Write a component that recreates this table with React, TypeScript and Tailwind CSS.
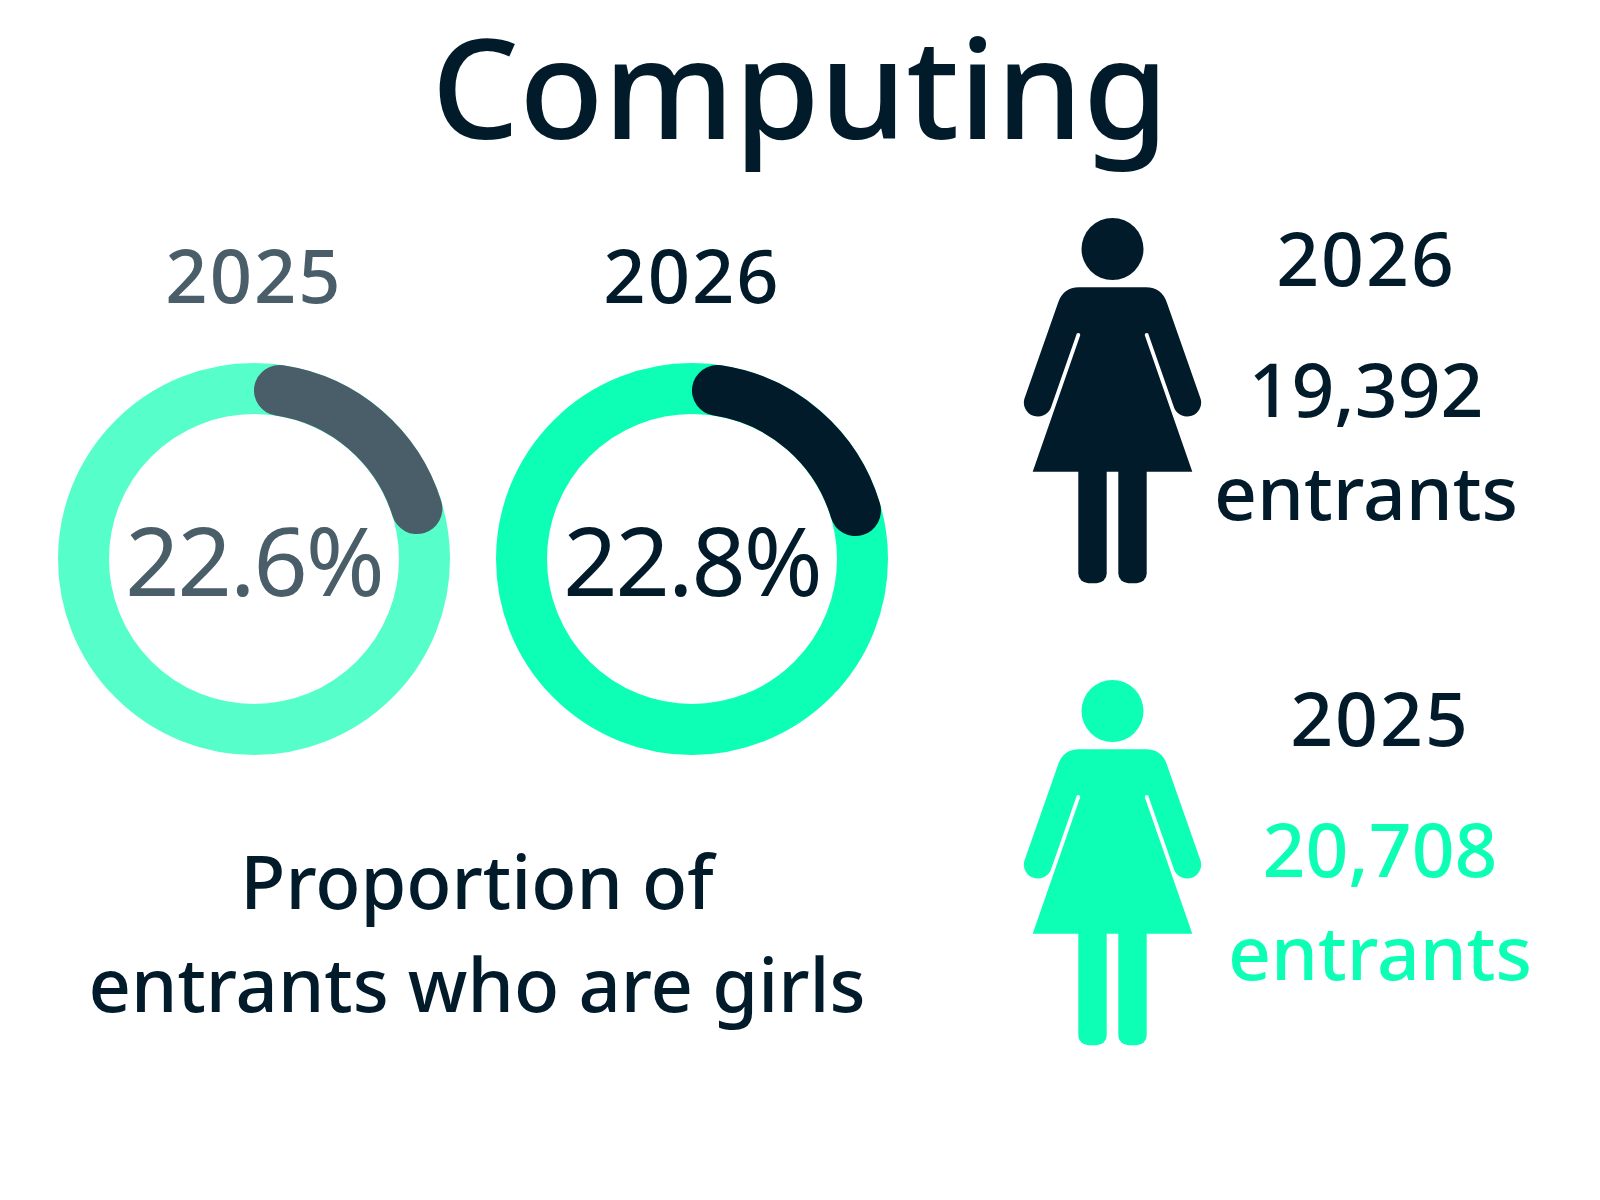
import React from "react";

const NAVY = "#021b2b";

function Donut({
  ring,
  arc,
  end,
  label,
  labelClass,
}: {
  ring: string;
  arc: string;
  end: [number, number];
  label: string;
  labelClass: string;
}) {
  return (
    <div className="grid w-[400px] h-[400px]">
      <svg
        width="400"
        height="400"
        viewBox="0 0 400 400"
        className="[grid-area:1/1]"
      >
        <circle cx="200" cy="200" r="170.5" fill="none" stroke={ring} strokeWidth="51" />
        <path
          d={`M 225.49 31.41 A 170.5 170.5 0 0 1 ${end[0]} ${end[1]}`}
          fill="none"
          stroke={arc}
          strokeWidth="51"
          strokeLinecap="round"
        />
      </svg>
      <div className="[grid-area:1/1] flex items-center justify-center">
        <span className={`text-[95px] leading-[130px] tracking-[-2px] font-normal ${labelClass}`}>{label}</span>
      </div>
    </div>
  );
}

function Woman({ color }: { color: string }) {
  return (
    <svg width="179" height="366" viewBox="0 0 179 366" className="shrink-0">
      <circle cx="89.5" cy="31" r="31" fill={color} />
      <path
        fill={color}
        d="M 56 69.3 Q 40.1 69.3 35 85 L 1.4 180.7 A 14 14 0 0 0 27.8 189.9 L 53.3 117 A 2 2 0 0 1 57.3 117 L 9.7 253.7 L 169.3 253.7 L 121.7 117 A 2 2 0 0 1 125.7 117 L 151.2 189.9 A 14 14 0 0 0 177.6 180.7 L 144 85 Q 138.9 69.3 123 69.3 Z"
      />
      <rect x="55.3" y="240" width="28.4" height="125.3" rx="10" fill={color} />
      <rect x="95.3" y="240" width="28.4" height="125.3" rx="10" fill={color} />
    </svg>
  );
}

export default function App() {
  return (
    <div
      className="w-[1600px] h-[1200px] bg-white flex flex-col overflow-hidden"
      style={{ fontFamily: '"Noto Sans", "Open Sans", sans-serif' }}
    >
      <h1 className="text-center text-[138px] leading-[170px] font-medium text-[#021b2b]">
        Computing
      </h1>
      <div className="flex">
        {/* Left column */}
        <div className="w-[950px] shrink-0 pl-[54px] flex flex-col">
          <div className="flex gap-[38px]">
            <div className="w-[400px] flex flex-col items-center">
              <div className="mt-[55px] text-[74px] leading-[100px] tracking-[2px] font-medium text-[#4a5e69]">2025</div>
              <div className="mt-[34px]">
                <Donut
                  ring="#56ffca"
                  arc="#4a5e69"
                  end={[362.88, 149.58]}
                  label="22.6%"
                  labelClass="text-[#4a5e69]"
                />
              </div>
            </div>
            <div className="w-[400px] flex flex-col items-center">
              <div className="mt-[55px] text-[74px] leading-[100px] tracking-[2px] font-medium text-[#021b2b]">2026</div>
              <div className="mt-[34px]">
                <Donut
                  ring="#0cffb4"
                  arc={NAVY}
                  end={[363.47, 151.58]}
                  label="22.8%"
                  labelClass="text-[#021b2b]"
                />
              </div>
            </div>
          </div>
          <div className="w-[838px] ml-[4px] mt-[70px] text-center text-[74px] leading-[103px] font-medium text-[#021b2b]">
            <div>Proportion of</div>
            <div>entrants who are girls</div>
          </div>
        </div>

        {/* Right column */}
        <div className="flex flex-col">
          <div className="flex items-start pl-[73px]">
            <div className="mt-[48px]">
              <Woman color={NAVY} />
            </div>
            <div className="mt-[36px] w-[328px] flex flex-col items-center text-[75px] leading-[103px] font-medium text-[#021b2b]">
              <div className="tracking-[2px]">2026</div>
              <div className="mt-[28px]">19,392</div>
              <div>entrants</div>
            </div>
          </div>
          <div className="flex items-start pl-[73px]">
            <div className="mt-[96px]">
              <Woman color="#0cffb4" />
            </div>
            <div className="mt-[82px] w-[356px] flex flex-col items-center text-[75px] leading-[103px] font-medium">
              <div className="tracking-[2px] text-[#021b2b]">2025</div>
              <div className="mt-[28px] text-[#0cffb4]">20,708</div>
              <div className="text-[#0cffb4]">entrants</div>
            </div>
          </div>
        </div>
      </div>
    </div>
  );
}
